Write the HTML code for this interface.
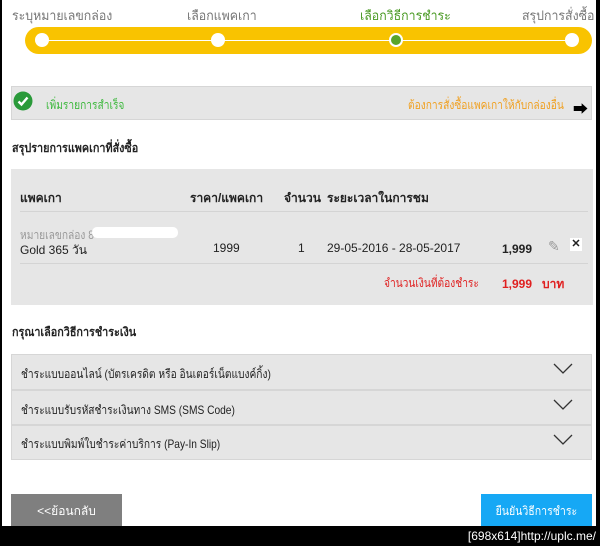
<!DOCTYPE html>
<html><head><meta charset="utf-8"><style>
*{margin:0;padding:0;box-sizing:border-box}
body{width:600px;height:546px;background:#000;position:relative;overflow:hidden;font-family:"Liberation Sans","Noto Sans CJK SC",sans-serif;font-size:12px;color:#222}
#pg{position:absolute;left:2px;top:0;width:594px;height:526px;background:#fff}
.a{position:absolute;white-space:nowrap}
.n{transform:scaleX(.85);transform-origin:left center}
.step{top:5px;font-size:13px;color:#777;transform:scaleX(.95);transform-origin:left center}
.box{position:absolute;background:#e6e6e6;border:1px solid #d6d6d6}
.b{font-weight:bold}
.chev{position:absolute;right:18px;top:8px}
</style></head><body>
<div id="pg">
<div class="a step" style="left:10px">ระบุหมายเลขกล่อง</div>
<div class="a step" style="left:185px">เลือกแพคเกา</div>
<div class="a step" style="left:358px;color:#4a9a24">เลือกวิธีการชำระ</div>
<div class="a step" style="left:520px">สรุปการสั่งซื้อ</div>
<div class="a" style="left:23px;top:27px;width:567px;height:27px;background:#f9c300;border-radius:14px"></div>
<div class="a" style="left:40px;top:40px;width:530px;height:1px;background:#fff"></div>
<div class="a" style="left:33px;top:33px;width:14px;height:14px;border-radius:50%;background:#fff"></div>
<div class="a" style="left:209px;top:33px;width:14px;height:14px;border-radius:50%;background:#fff"></div>
<div class="a" style="left:387px;top:33px;width:14px;height:14px;border-radius:50%;background:#5aa52a;border:2px solid #fff"></div>
<div class="a" style="left:563px;top:33px;width:14px;height:14px;border-radius:50%;background:#fff"></div>

<div class="box" style="left:9px;top:86px;width:581px;height:34px"></div>
<svg class="a" style="left:11px;top:91px" width="20" height="20" viewBox="0 0 20 20"><circle cx="10" cy="10" r="9.5" fill="#2a9a3a"/><path d="M5.5 10.5l3 3 6-7" stroke="#fff" stroke-width="2.4" fill="none"/></svg>
<div class="a n" style="left:44px;top:96px;color:#3cb83c">เพิ่มรายการสำเร็จ</div>
<div class="a n" style="left:406px;top:96px;color:#f0a020">ต้องการสั่งซื้อแพคเกาให้กับกล่องอื่น</div>
<div class="a" style="left:571px;top:98px;font-size:15px;color:#000;font-weight:bold">➡</div>

<div class="a b n" style="left:10px;top:139px;transform:scaleX(.9)">สรุปรายการแพคเกาที่สั่งซื้อ</div>
<div class="box" style="left:9px;top:169px;width:582px;height:136px;border:none"></div>
<div class="a b" style="left:18px;top:189px">แพคเกา</div>
<div class="a b" style="left:188px;top:189px">ราคา/แพคเกา</div>
<div class="a b" style="left:282px;top:189px">จำนวน</div>
<div class="a b" style="left:325px;top:189px">ระยะเวลาในการชม</div>
<div class="a" style="left:18px;top:211px;width:568px;height:1px;background:#d4d4d4"></div>
<div class="a n" style="left:18px;top:226px;color:#999">หมายเลขกล่อง 8</div>
<div class="a" style="left:90px;top:227px;width:86px;height:11px;background:#fff;border-radius:5px"></div>
<div class="a" style="left:18px;top:241px">Gold 365 วัน</div>
<div class="a" style="left:211px;top:241px">1999</div>
<div class="a" style="left:296px;top:241px">1</div>
<div class="a" style="left:325px;top:241px">29-05-2016 - 28-05-2017</div>
<div class="a b" style="left:500px;top:242px">1,999</div>
<div class="a" style="left:546px;top:238px;color:#999;font-size:14px">✎</div>
<div class="a b" style="left:568px;top:238px;width:12px;height:13px;background:#fff;font-size:11px;text-align:center;line-height:13px">✕</div>
<div class="a" style="left:18px;top:263px;width:568px;height:1px;background:#d4d4d4"></div>
<div class="a n" style="left:382px;top:274px;color:#e02020">จำนวนเงินที่ต้องชำระ</div>
<div class="a b" style="left:500px;top:275px;color:#e02020">1,999 &nbsp; บาท</div>

<div class="a b n" style="left:10px;top:323px;transform:scaleX(.9)">กรุณาเลือกวิธีการชำระเงิน</div>
<div class="box" style="left:9px;top:354px;width:581px;height:36px"><div class="a n" style="left:9px;top:10px">ชำระแบบออนไลน์ (บัตรเครดิต หรือ อินเตอร์เน็ตแบงค์กิ้ง)</div><svg class="chev" width="20" height="12"><path d="M1 1l9 9 9-9" stroke="#333" stroke-width="1.3" fill="none"/></svg></div>
<div class="box" style="left:9px;top:390px;width:581px;height:35px"><div class="a n" style="left:9px;top:10px">ชำระแบบรับรหัสชำระเงินทาง SMS (SMS Code)</div><svg class="chev" width="20" height="12"><path d="M1 1l9 9 9-9" stroke="#333" stroke-width="1.3" fill="none"/></svg></div>
<div class="box" style="left:9px;top:425px;width:581px;height:35px"><div class="a n" style="left:9px;top:9px">ชำระแบบพิมพ์ใบชำระค่าบริการ (Pay-In Slip)</div><svg class="chev" width="20" height="12"><path d="M1 1l9 9 9-9" stroke="#333" stroke-width="1.3" fill="none"/></svg></div>

<div class="a" style="left:9px;top:494px;width:111px;height:32px;background:#7f7f7f;color:#fff;text-align:center;line-height:34px">&lt;&lt;ย้อนกลับ</div>
<div class="a" style="left:479px;top:494px;width:111px;height:32px;background:#16a8f5;color:#fff;text-align:center;line-height:34px"><span style="display:inline-block;transform:scaleX(.88)">ยืนยันวิธีการชำระ</span></div>
</div>
<div class="a" style="right:4px;top:529px;color:#fff;font-family:'Liberation Sans',sans-serif;font-size:12px">[698x614]http://uplc.me/</div>
</body></html>
